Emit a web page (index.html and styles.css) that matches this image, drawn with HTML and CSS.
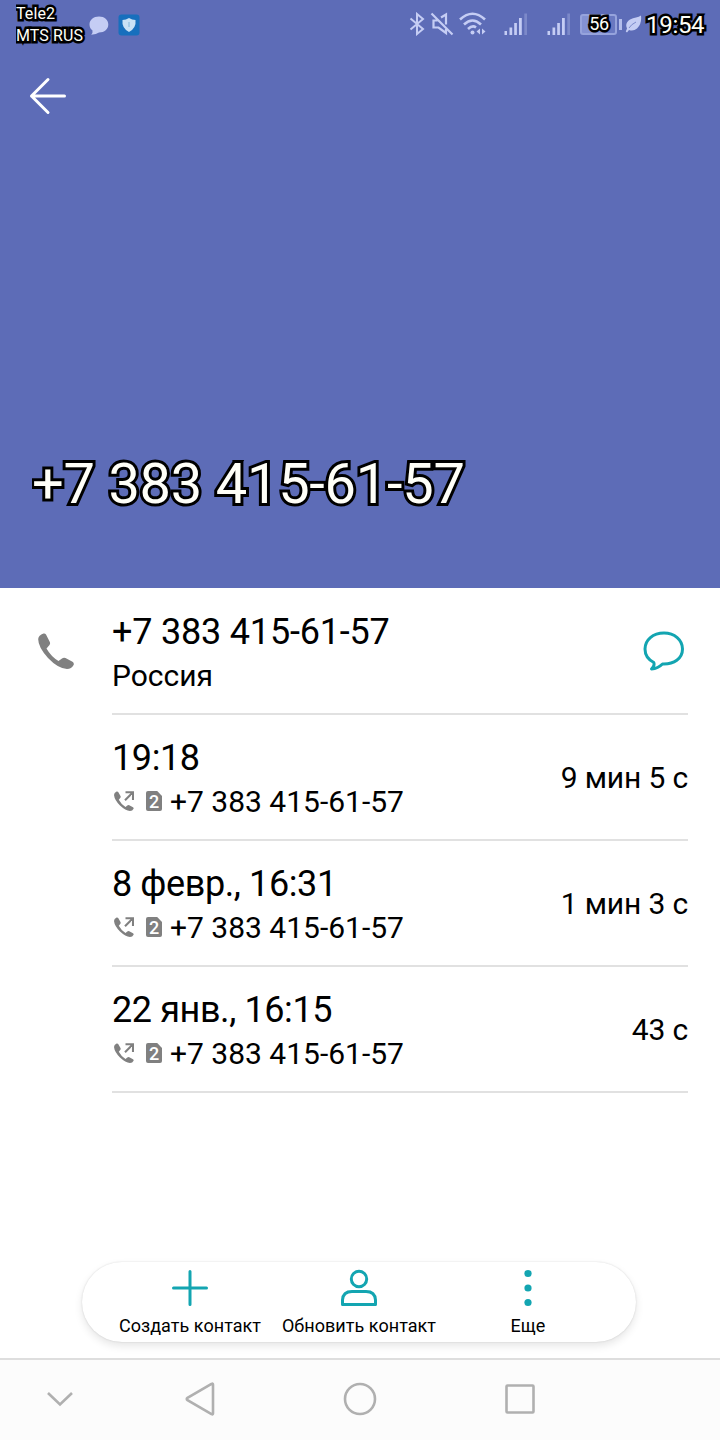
FILE: index.html
```html
<!DOCTYPE html>
<html lang="ru">

<head>
    <meta charset="UTF-8">
    <meta name="viewport" content="width=device-width, initial-scale=1.0">
    <title>+7 383 415-61-57</title>
    <link rel="stylesheet" href="styles.css">
</head>

<body>
    <!-- shared icons for the call log -->
    <svg class="sprite" width="0" height="0">
        <symbol id="phone" viewBox="0 0 36 36">
            <path d="M5.5 0.5 Q0.5 2 0.2 6 Q0 14 10 25 Q20 35.5 29 36 Q33.5 36 35.6 32 Q36.4 30 34.5 28.8 L27.5 25 Q25.5 24.200 24 25.600 L20.500 28 Q13 23.500 8.500 15.500 L11.500 12 Q12.600 10.500 11.700 8.800 L8 1.500 Q7 0 5.500 0.500 Z" />
        </symbol>
        <symbol id="outgoing" viewBox="0 0 20 20">
            <path d="M2.600 0.500 Q0 1.500 0 4 Q0.500 9 6 14.500 Q11.500 19.700 16 20 Q18.500 20 19.600 17.800 Q20 16.800 19 16.200 L15.300 14.200 Q14.200 13.700 13.300 14.500 L11.500 15.900 Q7.200 13.300 4.800 8.700 L6.400 6.800 Q7 6 6.500 5 L4.200 1.100 Q3.600 0.100 2.600 0.500 Z" />
            <path d="M11 9.200 L19 1.200 M11.500 1.200 H19 V9" fill="none" stroke="currentColor" stroke-width="2.100" />
        </symbol>
        <symbol id="signal" viewBox="0 0 24 22">
            <path d="M0.500 18 h2.500 v4 h-2.500 z M5.500 14.500 h2.700 v7.500 h-2.700 z M10.200 10 h2.700 v12 h-2.700 z M15 5 h2.800 v17 h-2.800 z" />
            <path d="M20.300 0.500 h2.700 v21.500 h-2.700 z" opacity="0.3" />
        </symbol>
    </svg>

    <div class="header">
        <div class="status-bar">
            <div class="carriers">
                <p>Tele2</p>
                <p>MTS RUS</p>
            </div>
            <svg class="bubble" width="20" height="20" viewBox="0 0 20 20">
                <path d="M10 0.500 C15.500 0.500 19.300 4 19.300 8.500 C19.300 13 15.500 16.500 10 16.500 Q7.500 18.500 2.200 18.700 Q4 16.500 3.500 14.500 C1.500 13 0.500 11 0.500 8.500 C0.500 4 4.500 0.500 10 0.500 Z" />
            </svg>
            <svg class="shield" width="22" height="22" viewBox="0 0 22 22">
                <rect x="0.500" y="0.500" width="21" height="21" rx="3" fill="#176fbd" />
                <path d="M11 4 Q14 6 17.500 6 Q18.500 14 11 18 Q3.500 14 4.500 6 Q8 6 11 4 Z" fill="#c9e1f5" />
                <path d="M11 8 V13" stroke="#a5cce8" stroke-width="2" />
            </svg>

            <div class="indicators">
                <svg class="bluetooth" width="16" height="24" viewBox="0 0 16 24">
                    <path d="M1.500 6.500 L14 17 L8 22 V2 L14 7 L1.500 17.500" fill="none" stroke="currentColor" stroke-width="2" />
                </svg>
                <svg class="mute" width="24" height="24" viewBox="0 0 24 24">
                    <path d="M7.500 8.500 H3.500 V15.500 H8.500 L16 21 V17 M11 5.500 L16 2.500 V12.500 M1.500 1.500 L22.500 22.500" fill="none" stroke="currentColor" stroke-width="2.200" />
                </svg>
                <svg class="wifi" width="28" height="24" viewBox="0 0 28 24">
                    <path d="M1 7.500 Q13.500 -4 26 7.500 M5 12.500 Q13.500 4.500 22 12.500 M9 17 Q13.500 12.800 17 15.500" fill="none" stroke="currentColor" stroke-width="2.600" />
                    <circle cx="13.500" cy="20.500" r="2" />
                    <path d="M21 16.500 V22.500 L17.500 19.500 Z M23 16.500 V22.500 L26.500 19.500 Z" />
                </svg>
                <svg class="signal" width="24" height="22"><use href="#signal" /></svg>
                <svg class="signal" width="24" height="22"><use href="#signal" /></svg>
                <div class="battery"><span>56</span></div>
                <svg class="leaf" width="17" height="18" viewBox="0 0 17 18">
                    <path d="M16 0.500 Q17 9 12 13.500 Q8.500 16.500 4 15 L2 17.500 L0.800 16.500 L2 13.500 Q-0.500 8 5 4.500 Q8 2.800 11 2.500 Q14 2 16 0.500 Z" />
                    <path d="M4 13 Q6 9.500 11 7" fill="none" stroke="#7c8acb" stroke-width="1" />
                </svg>
                <p class="clock">19:54</p>
            </div>
        </div>

        <svg class="back" width="40" height="40" viewBox="0 0 40 40">
            <path d="M36.500 20 H3.500 M20 3.500 L3.500 20 L20 36.500" fill="none" stroke="#fff" stroke-width="3" stroke-linecap="round" stroke-linejoin="round" />
        </svg>

        <h1>+7 383 415-61-57</h1>
    </div>

    <div class="content">
        <div class="row number">
            <svg class="phone" width="36" height="36"><use href="#phone" /></svg>
            <div class="info">
                <div class="details">
                    <p class="title">+7 383 415-61-57</p>
                    <p class="sub">Россия</p>
                </div>
                <svg class="message" width="42" height="40" viewBox="0 0 42 40">
                    <path d="M21 2 C31.500 2 39.500 8.800 39.500 18 C39.500 27.500 31 33.500 19.500 33 Q15 37.500 8.500 38 Q12 34.500 10.800 31.500 C5 28.500 2 24 2 18 C2 8.800 10 2 21 2 Z" fill="none" stroke="#13a5b1" stroke-width="3" stroke-linejoin="round" />
                </svg>
            </div>
        </div>

        <div class="row">
            <div class="info">
                <div class="details">
                    <p class="title">19:18</p>
                    <p class="sub">
                        <svg class="outgoing" width="20" height="20"><use href="#outgoing" /></svg>
                        <span class="sim">2</span>
                        <span>+7 383 415-61-57</span>
                    </p>
                </div>
                <p class="duration">9 мин 5 с</p>
            </div>
        </div>

        <div class="row">
            <div class="info">
                <div class="details">
                    <p class="title">8 февр., 16:31</p>
                    <p class="sub">
                        <svg class="outgoing" width="20" height="20"><use href="#outgoing" /></svg>
                        <span class="sim">2</span>
                        <span>+7 383 415-61-57</span>
                    </p>
                </div>
                <p class="duration">1 мин 3 с</p>
            </div>
        </div>

        <div class="row">
            <div class="info">
                <div class="details">
                    <p class="title">22 янв., 16:15</p>
                    <p class="sub">
                        <svg class="outgoing" width="20" height="20"><use href="#outgoing" /></svg>
                        <span class="sim">2</span>
                        <span>+7 383 415-61-57</span>
                    </p>
                </div>
                <p class="duration">43 с</p>
            </div>
        </div>
    </div>

    <div class="actions">
        <div class="action">
            <svg width="38" height="38" viewBox="0 0 38 38">
                <path d="M19 2.500 V35.500 M2.500 19 H35.500" stroke-width="3" stroke-linecap="round" />
            </svg>
            <p>Создать контакт</p>
        </div>
        <div class="action">
            <svg width="38" height="38" viewBox="0 0 38 38">
                <circle cx="19" cy="10" r="7.700" stroke-width="3" />
                <path d="M2.500 35.500 V31 Q3 22.500 12 22.500 H26 Q35 22.500 35.500 31 V35.500 Z" stroke-width="3" stroke-linejoin="round" />
            </svg>
            <p>Обновить контакт</p>
        </div>
        <div class="action">
            <svg class="dots" width="38" height="38" viewBox="0 0 38 38">
                <circle cx="19" cy="4.500" r="3.600" />
                <circle cx="19" cy="19" r="3.600" />
                <circle cx="19" cy="33.500" r="3.600" />
            </svg>
            <p>Еще</p>
        </div>
    </div>

    <div class="nav-bar">
        <svg width="120" height="36" viewBox="0 0 120 36">
            <path d="M48 12 L60 23.500 L72 12" />
        </svg>
        <svg width="160" height="36" viewBox="0 0 160 36">
            <path d="M93 3.500 V32.500 Q93 34 91.500 33 L67.500 19.200 Q66 18 67.500 16.800 L91.500 3 Q93 2 93 3.500 Z" />
        </svg>
        <svg width="160" height="36" viewBox="0 0 160 36">
            <circle cx="80" cy="18" r="15" />
        </svg>
        <svg width="160" height="36" viewBox="0 0 160 36">
            <rect x="66.500" y="4.500" width="27" height="27" rx="1" />
        </svg>
    </div>
</body>

</html>
```

FILE: styles.css
```css
* {
    margin: 0;
    padding: 0;
    box-sizing: border-box;
}

body {
    width: 720px;
    height: 1440px;
    display: flex;
    flex-direction: column;
    font-family: Roboto, sans-serif;
    background-color: #fff;
    color: #000;
    overflow: hidden;
}

svg {
    display: block;
    flex-shrink: 0;
}

.sprite {
    position: absolute;
}

/* Header */
.header {
    height: 588px;
    display: flex;
    flex-direction: column;
    background-color: #5d6cb7;
}

.status-bar {
    height: 48px;
    padding: 0 12px 0 16px;
    display: flex;
    align-items: center;
    color: #c5cdf4;
}

.status-bar svg {
    fill: currentColor;
}

.carriers,
.clock,
.battery span,
h1 {
    color: #fffff8;
    -webkit-text-stroke: 5px #000;
    paint-order: stroke fill;
    stroke-linejoin: round;
}

.carriers {
    width: 73px;
    padding-top: 2px;
    font-size: 16px;
    line-height: 22px;
    letter-spacing: 0.1px;
    white-space: nowrap;
    clip-path: inset(0);
}

.bubble {
    margin: 4px 9px 0 0;
}

.shield {
    margin-top: 1px;
}

.indicators {
    margin-left: auto;
    display: flex;
    align-items: center;
}

.mute {
    margin-left: 5px;
}

.wifi {
    margin-left: 5px;
}

.signal {
    margin-left: 19px;
}

.wifi + .signal {
    margin-left: 17px;
}

.battery {
    width: 37px;
    height: 21px;
    margin-left: 9px;
    border: 2px solid #96a3dc;
    border-radius: 3px;
    background: linear-gradient(to right, #8492d3 60%, #6978c1 60%);
    display: flex;
    align-items: center;
    justify-content: center;
    position: relative;
}

.battery::after {
    content: '';
    position: absolute;
    right: -7px;
    top: 3px;
    width: 3px;
    height: 11px;
    background-color: #b3bdeb;
}

.battery span {
    padding-left: 1px;
    font-size: 18px;
    line-height: 20px;
    letter-spacing: -0.3px;
}

.leaf {
    margin-left: 8px;
}

.clock {
    width: 62px;
    margin-left: 4px;
    padding-top: 2px;
    font-size: 24px;
    line-height: 28px;
    letter-spacing: -0.3px;
}

.back {
    margin: 28px 0 0 28px;
}

h1 {
    margin: auto 0 71px 32px;
    font-size: 56px;
    font-weight: 400;
    line-height: 66px;
    letter-spacing: -0.25px;
    white-space: nowrap;
    clip-path: inset(0);
    -webkit-text-stroke-width: 6px;
}

/* Call log */
.content {
    flex: 1;
}

.row {
    height: 126px;
    padding-right: 32px;
    padding-left: 112px;
    display: flex;
}

.row.number {
    height: 127px;
    padding-left: 38px;
}

.info {
    flex: 1;
    padding-top: 22px;
    border-bottom: 2px solid #e1e1e1;
    display: flex;
    justify-content: space-between;
}

.number .info {
    padding-top: 23px;
    margin-left: 38px;
}

.phone {
    margin-top: 45px;
    fill: #808080;
}

.title {
    font-size: 36px;
    line-height: 42px;
    letter-spacing: -0.4px;
}

.number .title {
    letter-spacing: -0.2px;
}

.sub {
    margin-top: 5px;
    font-size: 30px;
    line-height: 36px;
    display: flex;
    align-items: center;
}

.message {
    margin: 20px 3px 0 0;
}

.outgoing {
    margin: 0 0 2px 2px;
    fill: #808080;
    color: #808080;
}

.sim {
    width: 16px;
    height: 20px;
    margin: 0 8px 2px 12px;
    background-color: #808080;
    border-radius: 2px;
    clip-path: polygon(0 0, 70% 0, 100% 25%, 100% 100%, 0 100%);
    color: #fff;
    font-size: 18px;
    font-weight: 500;
    line-height: 21px;
    text-align: center;
}

.duration {
    margin-top: 23px;
    font-size: 30px;
    line-height: 36px;
    letter-spacing: -0.15px;
}

/* Bottom actions */
.actions {
    width: 554px;
    height: 80px;
    margin: 0 0 16px 82px;
    padding: 7px 24px 0 23px;
    display: flex;
    border-radius: 40px;
    background-color: #fff;
    box-shadow: 0 0 2px rgba(0, 0, 0, 0.14), 0 4px 9px rgba(0, 0, 0, 0.1);
}

.action {
    flex: 1;
    display: flex;
    flex-direction: column;
    align-items: center;
    font-size: 18px;
    line-height: 22px;
    letter-spacing: 0.05px;
    white-space: nowrap;
}

.action svg {
    fill: none;
    stroke: #13a5b1;
}

.action .dots {
    fill: #13a5b1;
    stroke: none;
}

.action p {
    margin-top: 8px;
    padding-left: 1px;
}

/* System navigation */
.nav-bar {
    height: 82px;
    padding-top: 21px;
    border-top: 2px solid #dedede;
    background-color: #fcfcfc;
    display: flex;
}

.nav-bar svg {
    fill: none;
    stroke: #b0b0b0;
    stroke-width: 2.6;
}
```
